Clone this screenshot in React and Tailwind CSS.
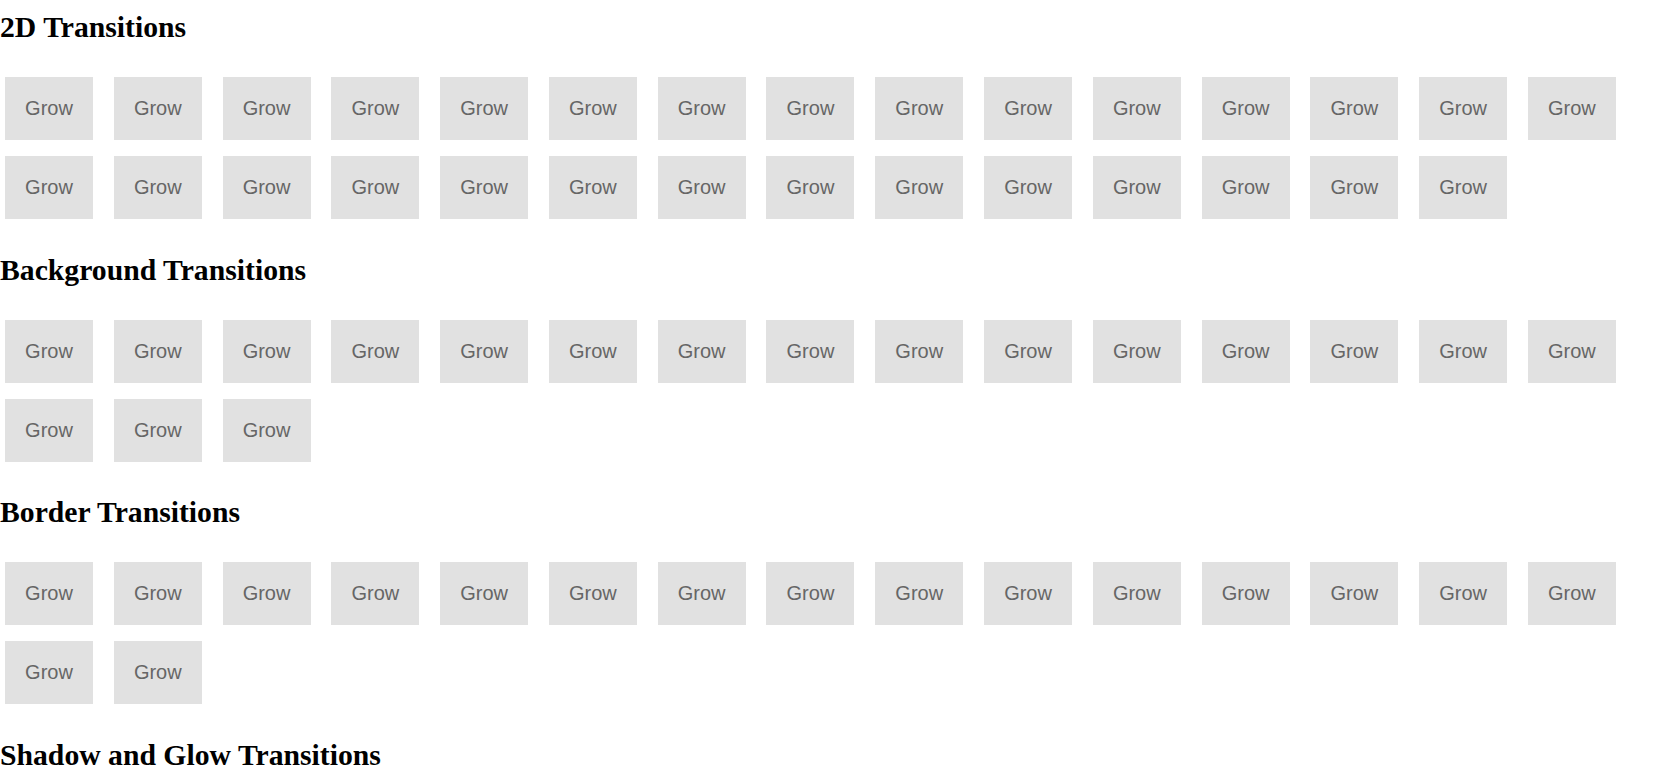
import React from "react";

const sections = [
  { title: "2D Transitions", count: 29 },
  { title: "Background Transitions", count: 18 },
  { title: "Border Transitions", count: 17 },
  { title: "Shadow and Glow Transitions", count: 10 },
];

function Btn() {
  return (
    <div
      className="w-[88px] h-[63px] bg-[#e1e1e1] text-[#666666] text-[20px] leading-[23px] flex items-center justify-center cursor-pointer"
      style={{ fontFamily: '"Liberation Sans", Arial, sans-serif' }}
    >
      Grow
    </div>
  );
}

export default function App() {
  return (
    <div className="bg-white min-h-screen pt-[10px]">
      {sections.map((s, i) => (
        <section key={s.title} className={i === 0 ? "" : i === 2 ? "mt-[33px]" : "mt-[34px]"}>
          <h2
            className="text-[29.7px] leading-[34px] font-bold text-black"
            style={{ fontFamily: '"Liberation Serif", "Times New Roman", serif' }}
          >
            {s.title}
          </h2>
          <div className="mt-[33px] ml-[5px] flex flex-wrap gap-x-[20.79px] gap-y-[16px]">
            {Array.from({ length: s.count }).map((_, k) => (
              <Btn key={k} />
            ))}
          </div>
        </section>
      ))}
    </div>
  );
}
